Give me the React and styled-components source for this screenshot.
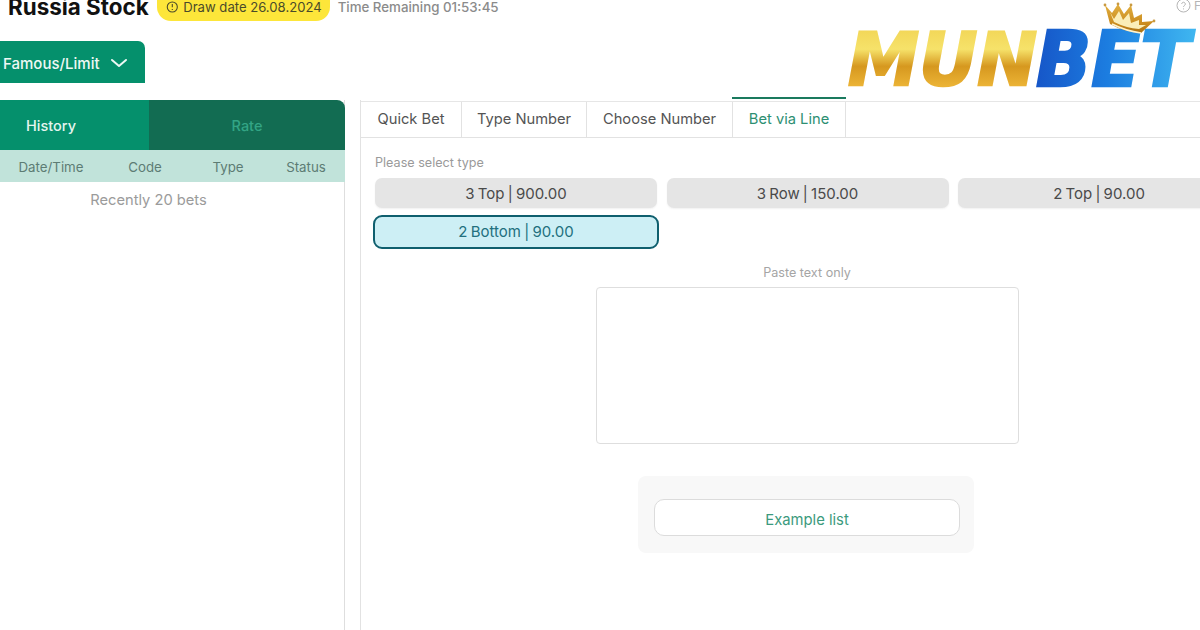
import styled, { createGlobalStyle } from 'styled-components'

const GlobalStyle = createGlobalStyle`
  html, body {
    margin: 0;
    height: 630px;
    overflow: hidden;
    background: #fff;
    font-family: Inter, "Liberation Sans", sans-serif;
  }
`;

const Page = styled.div`
  position: relative;
  width: 1300px;
  height: 638px;
  margin: -8px 0 0 -47px;
`;

const Header = styled.header`
  display: flex;
  align-items: center;
  height: 29px;
  padding-left: 55px;
`;

const Title = styled.h1`
  margin: 0;
  font-size: 22.4px;
  font-weight: 700;
  line-height: 29px;
  color: #111;
  white-space: nowrap;
`;

const DatePill = styled.div`
  display: flex;
  align-items: center;
  gap: 5px;
  height: 29px;
  margin-left: 8px;
  padding: 0 8px 0 9px;
  box-sizing: border-box;
  width: 173px;
  border-radius: 0 0 14px 14px;
  background: #fde63a;
  color: #4a4a2a;
  font-size: 13.1px;
  white-space: nowrap;
`;

const TimeLeft = styled.div`
  margin-left: 8px;
  font-size: 13.3px;
  font-weight: 500;
  color: #8b8b8b;
  white-space: nowrap;
`;

const Help = styled.div`
  position: absolute;
  left: 1223px;
  top: 6px;
  display: flex;
  align-items: center;
  gap: 3px;
  color: #b5b5b5;
  font-size: 12px;
`;

const LimitTab = styled.button`
  display: flex;
  align-items: center;
  gap: 9px;
  width: 192px;
  height: 42px;
  margin: 20px 0 17px;
  padding: 2px 0 0 50px;
  border: 0;
  border-radius: 0 7px 0 0;
  background: #05906c;
  color: #eef8f4;
  font: 500 15px Inter, "Liberation Sans", sans-serif;
`;

const Columns = styled.div`
  display: flex;
  align-items: stretch;
  height: 538px;
`;

const Sidebar = styled.aside`
  width: 392px;
  flex: none;
  border-right: 1px solid #dedede;
  box-sizing: border-box;
`;

const SideTabs = styled.div`
  display: flex;
  height: 50px;
  margin-right: -1px;
  border-radius: 0 8px 0 0;
  overflow: hidden;
`;

const SideTab = styled.div`
  flex: 1;
  display: flex;
  align-items: center;
  justify-content: center;
  font-size: 14.5px;
  font-weight: 500;
  background: ${p => (p.$active ? '#05906c' : '#126c52')};
  color: ${p => (p.$active ? '#e4f5ef' : '#33a585')};
`;

const TableHead = styled.div`
  position: relative;
  height: 32px;
  margin-right: -1px;
  background: #c1e3da;
`;

const HeadCell = styled.span`
  position: absolute;
  top: 0;
  left: ${p => p.$x}px;
  transform: translateX(-50%);
  line-height: 34px;
  font-size: 13.3px;
  color: #5d7c74;
  white-space: nowrap;
`;

const Recent = styled.div`
  padding-top: 8px;
  text-align: center;
  font-size: 14.7px;
  line-height: 20px;
  color: #9b9b9b;
`;

const Main = styled.main`
  width: 893px;
  margin-left: 15px;
  border-left: 1px solid #e2e2e2;
  box-sizing: border-box;
`;

const Tabs = styled.nav`
  display: flex;
  height: 37px;
  margin-top: 1px;
  border-top: 1px solid #e6e6e6;
  border-bottom: 1px solid #e2e2e2;
  box-sizing: border-box;
`;

const Tab = styled.div`
  position: relative;
  display: flex;
  align-items: center;
  justify-content: center;
  width: ${p => p.$width}px;
  padding-bottom: 2px;
  box-sizing: border-box;
  font-size: 14.7px;
  color: ${p => (p.$active ? '#2d8f72' : '#545454')};
  border-right: 1px solid #e2e2e2;
  white-space: nowrap;

  ${p => p.$active && `
    &::before {
      content: '';
      position: absolute;
      left: -1px;
      right: -1px;
      top: -5px;
      height: 2px;
      background: #1a7a5e;
    }
  `}
`;

const Body = styled.div`
  padding: 17px 14px 0;
`;

const FieldLabel = styled.div`
  font-size: 12.6px;
  line-height: 16px;
  color: ${p => (p.$center ? '#a5a5a5' : '#9a9a9a')};
  text-align: ${p => (p.$center ? 'center' : 'left')};
`;

const TypeGrid = styled.div`
  display: grid;
  grid-template-columns: repeat(3, 282px);
  column-gap: 9.5px;
  row-gap: 7px;
  margin-top: 7px;
`;

const TypeButton = styled.button`
  height: ${p => (p.$active ? 34 : 30)}px;
  margin: ${p => (p.$active ? '0 -2px' : 0)};
  padding: ${p => (p.$active ? '0 0 2px' : 0)};
  border: ${p => (p.$active ? '2px solid #0f5f6e' : 0)};
  border-radius: ${p => (p.$active ? 9 : 7)}px;
  background: ${p => (p.$active ? '#cdeff5' : '#e5e5e5')};
  color: ${p => (p.$active ? '#22707e' : '#4a4a4a')};
  box-shadow: ${p => (p.$active ? 'none' : '0 1px 2px rgba(0, 0, 0, 0.06)')};
  font: 15px Inter, "Liberation Sans", sans-serif;
  word-spacing: -1px;
`;

const PasteArea = styled.section`
  margin-top: 16px;
`;

const TextBox = styled.textarea`
  display: block;
  width: 423px;
  height: 157px;
  margin: 6px auto 0;
  box-sizing: border-box;
  border: 1px solid #dedede;
  border-radius: 4px;
  background: #fff;
  resize: none;
`;

const ExamplePanel = styled.div`
  width: 336px;
  height: 77px;
  margin: 32px 0 0 263px;
  padding: 23px 14px 0 16px;
  box-sizing: border-box;
  background: #f8f8f8;
  border-radius: 8px;
`;

const ExampleButton = styled.button`
  display: block;
  width: 100%;
  height: 37px;
  padding-top: 5px;
  border: 1px solid #dcdcdc;
  border-radius: 10px;
  background: #fff;
  color: #3b9a7d;
  font: 14.8px Inter, "Liberation Sans", sans-serif;
`;

const Logo = styled.svg`
  position: absolute;
  left: 887px;
  top: 8px;
  width: 360px;
  height: 95px;
  overflow: visible;
`;

const types = [
  { label: '3 Top | 900.00' },
  { label: '3 Row | 150.00' },
  { label: '2 Top | 90.00' },
  { label: '2 Bottom | 90.00', active: true },
]

const heads = [
  { label: 'Date/Time', x: 98 },
  { label: 'Code', x: 192 },
  { label: 'Type', x: 275 },
  { label: 'Status', x: 353 },
]

const tabs = [
  { label: 'Quick Bet', width: 101 },
  { label: 'Type Number', width: 125 },
  { label: 'Choose Number', width: 146 },
  { label: 'Bet via Line', width: 113, active: true },
]

const MunbetLogo = () => (
  <Logo viewBox="840 0 360 95" aria-label="MUNBET">
    <defs>
      <linearGradient id="gold" x1="0" y1="0" x2="0" y2="1">
        <stop offset="0" stopColor="#f0cf4c" />
        <stop offset="0.38" stopColor="#f6e26a" />
        <stop offset="0.58" stopColor="#d6981f" />
        <stop offset="0.82" stopColor="#ecb436" />
        <stop offset="1" stopColor="#c4841a" />
      </linearGradient>
      <linearGradient id="blue" x1="0" y1="0" x2="1" y2="0">
        <stop offset="0" stopColor="#1656c8" />
        <stop offset="0.45" stopColor="#1c7de0" />
        <stop offset="1" stopColor="#3fb6f0" />
      </linearGradient>
      <linearGradient id="crown" x1="0" y1="0" x2="0" y2="1">
        <stop offset="0" stopColor="#e2b040" />
        <stop offset="0.7" stopColor="#c98a1e" />
        <stop offset="1" stopColor="#a86f12" />
      </linearGradient>
    </defs>
    <text x="848" y="85" textLength="189" lengthAdjust="spacingAndGlyphs"
      fontFamily="'DejaVu Sans', sans-serif" fontWeight="700" fontStyle="italic"
      fontSize="73" fill="url(#gold)" stroke="url(#gold)" strokeWidth="2.5">MUN</text>
    <text x="1036" y="86" textLength="154" lengthAdjust="spacingAndGlyphs"
      fontFamily="'DejaVu Sans', sans-serif" fontWeight="700" fontStyle="italic"
      fontSize="76" fill="url(#blue)" stroke="url(#blue)" strokeWidth="2.5">BET</text>
    <path d="M1105 5 L1112 13 L1118 4 L1124 14 L1131 5 L1134 18 L1142 14 L1142 22 L1154 21 L1141 33 Q1124 32 1110 24 Z"
      fill="url(#crown)" />
    <path d="M1110 12 L1114 19 L1119 11 L1123 20 L1129 13 L1131 23 L1139 20 L1139 25 L1146 25 L1139 29 Q1126 28 1114 22 Z"
      fill="#fbeeb8" />
    <path d="M1112 24 Q1126 31 1141 33" fill="none" stroke="#fff4cf" strokeWidth="1.5" />
    <circle cx="1105" cy="5" r="1.4" fill="#c99a40" />
    <circle cx="1118" cy="4" r="1.4" fill="#c99a40" />
    <circle cx="1131" cy="5" r="1.4" fill="#c99a40" />
    <circle cx="1154" cy="21" r="1.4" fill="#c99a40" />
  </Logo>
)

const App = () => {
  return (
    <>
      <GlobalStyle />
      <Page>
        <Header>
          <Title>Russia Stock</Title>
          <DatePill>
            <svg width="14" height="14" viewBox="0 0 14 14" fill="none" stroke="#4a4a2a" strokeWidth="1.2">
              <circle cx="7" cy="7" r="5.6" />
              <path d="M7 3.8v3.6M7 9.2v1" />
            </svg>
            Draw date 26.08.2024
          </DatePill>
          <TimeLeft>Time Remaining 01:53:45</TimeLeft>
        </Header>

        <Help>
          <svg width="15" height="15" viewBox="0 0 15 15" fill="none" stroke="#b5b5b5" strokeWidth="1">
            <circle cx="7.5" cy="7.5" r="6.5" />
            <path d="M5.7 6a1.8 1.8 0 1 1 2.7 1.6c-.6.4-.9.7-.9 1.4M7.5 10.4v1" />
          </svg>
          F
        </Help>

        <LimitTab>
          Famous/Limit
          <svg width="20" height="20" viewBox="0 0 20 20" fill="none" stroke="#eef8f4" strokeWidth="2" strokeLinecap="round" strokeLinejoin="round">
            <path d="M3 7l7 6 7-6" />
          </svg>
        </LimitTab>

        <Columns>
          <Sidebar>
            <SideTabs>
              <SideTab $active>History</SideTab>
              <SideTab>Rate</SideTab>
            </SideTabs>
            <TableHead>
              {heads.map(h => <HeadCell key={h.label} $x={h.x}>{h.label}</HeadCell>)}
            </TableHead>
            <Recent>Recently 20 bets</Recent>
          </Sidebar>

          <Main>
            <Tabs>
              {tabs.map(t => <Tab key={t.label} $width={t.width} $active={t.active}>{t.label}</Tab>)}
            </Tabs>
            <Body>
              <FieldLabel>Please select type</FieldLabel>
              <TypeGrid>
                {types.map(t => <TypeButton key={t.label} $active={t.active}>{t.label}</TypeButton>)}
              </TypeGrid>
              <PasteArea>
                <FieldLabel $center>Paste text only</FieldLabel>
                <TextBox />
              </PasteArea>
              <ExamplePanel>
                <ExampleButton>Example list</ExampleButton>
              </ExamplePanel>
            </Body>
          </Main>
        </Columns>

        <MunbetLogo />
      </Page>
    </>
  )
}

export default App
